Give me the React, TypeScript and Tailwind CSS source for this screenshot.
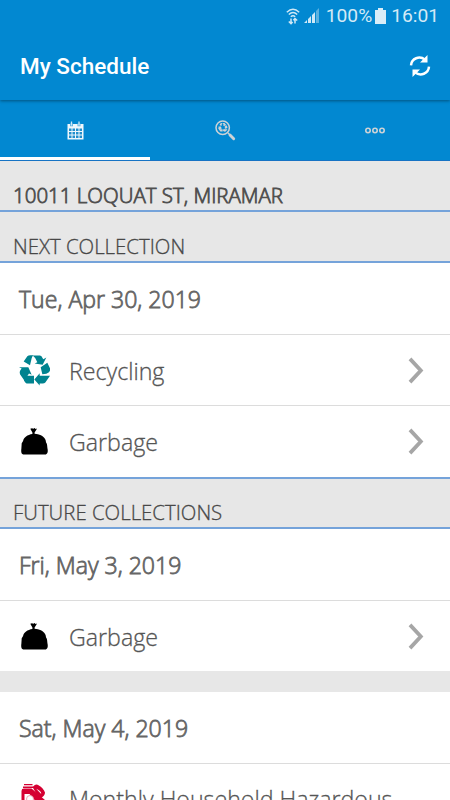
import { clsx } from 'clsx';
import type { ReactNode } from 'react';

function WifiIcon() {
  return (
    <svg viewBox="0 0 14 17" className="h-[17px] w-[14px]" fill="none" stroke="#cfe8f6" strokeWidth="1.4">
      <path d="M.8 4.2Q7-1.8 13.200 4.200M2.800 6.500Q7 2.400 11.200 6.500M4.800 8.700Q7 6.600 9.200 8.700" />
      <path d="M5 10.500v5M9 10.500v5M2.800 13.500 5 15.600l1.600-1.700M7.400 12.300 9 10.600l2.200 1.900" strokeWidth="1.500" />
    </svg>
  );
}

function SignalIcon() {
  return (
    <svg viewBox="0 0 16 16" className="h-4 w-4">
      <path d="M0 15h3v-3zM4 15h3V8L4 11zM8 15h3V4L8 7z" fill="#cfe8f6" />
      <path d="M12 15h3V0l-3 3z" fill="#5cb1df" />
    </svg>
  );
}

function BatteryIcon() {
  return (
    <svg viewBox="0 0 11 16" className="h-4 w-[11px]" fill="#d9edf8">
      <path d="M3 0h5v2h3v14H0V2h3z" />
    </svg>
  );
}

function RefreshIcon() {
  return (
    <svg viewBox="0 0 22 22" className="h-[22px] w-[22px]">
      <path d="M2 10.300C2.500 3.500 10.500.2 16 4.700M20 11.700C19.500 18.500 11.500 21.800 6 17.300" fill="none" stroke="#fff" strokeWidth="2.500" />
      <path d="M18.500 0v7.500H11zM3.500 22v-7.500H11z" fill="#fff" />
    </svg>
  );
}

function CalendarIcon() {
  return (
    <svg viewBox="0 0 17 19" className="h-[19px] w-[17px]">
      <path d="M.5 3h16v15.500H.5z" fill="#eef7fc" />
      <path d="M2 7.500h2.500V10H2zM5.500 7.500H8V10H5.500zM9 7.500h2.500V10H9zM12.500 7.500H15V10h-2.500zM2 11h2.500v2.500H2zM5.500 11H8v2.500H5.500zM9 11h2.500v2.500H9zM12.500 11H15v2.500h-2.500zM2 14.500h2.500V17H2zM5.500 14.500H8V17H5.500zM9 14.500h2.500V17H9zM12.500 14.500H15V17h-2.500z" fill="#218fcd" />
      <path d="M4.500 2.500v2.800M12 2.500v2.800" stroke="#5cb1df" strokeWidth="3" />
      <path d="M4.500.5v4M12 .5v4" stroke="#cfe8f6" strokeWidth="1.300" />
    </svg>
  );
}

function RecyclePaths() {
  return (
    <>
      <path d="M14 19 25 3q3-3 9-3h9q-4 5-5 9L33 30z" />
      <path d="M41 1h22q5 1 8 8l2 3 9-5-11 22-24-4 8-4q-4-13-14-20z" />
      <path d="m65 36 20-13 8 16q2 7-3 12-6 6-20 6z" />
      <path d="M62 91 46 73l16-19v8h31L79 82q-3 3-8 3h-9z" />
      <path d="M0 36h28l10 23-8-4-14 21L3 57q-3-6 1-12l4-5z" />
      <path d="M20 62h25v23H26q-7 0-11-10z" />
    </>
  );
}

function RecycleIcon() {
  return (
    <svg viewBox="0 0 93 92" className="h-[31px] w-[31px]" fill="#00838f">
      <RecyclePaths />
    </svg>
  );
}

function SearchIcon() {
  return (
    <svg viewBox="0 0 21 21" className="h-[21px] w-[21px]">
      <circle cx="7.700" cy="7.700" r="6.700" fill="none" stroke="#cdd2d6" strokeWidth="1.500" />
      <path d="m12.800 12.800 2 2" stroke="#cdd2d6" strokeWidth="1.300" />
      <path d="m15 15 3.700 3.700" stroke="#cdd2d6" strokeWidth="2.900" strokeLinecap="round" />
      <g transform="translate(3.100 3) scale(.1)" fill="#cdd2d6">
        <RecyclePaths />
      </g>
    </svg>
  );
}

function MoreIcon() {
  return (
    <svg viewBox="0 0 20 7" className="h-[7px] w-5" fill="none" stroke="#cdd2d6" strokeWidth="1.600">
      <circle cx="3" cy="3.500" r="2.200" />
      <circle cx="10" cy="3.500" r="2.200" />
      <circle cx="17" cy="3.500" r="2.200" />
    </svg>
  );
}

function GarbageIcon() {
  return (
    <svg viewBox="0 0 27 27" className="h-[27px] w-[27px]">
      <path d="M9.300.8 11 .3l1.300.5L13.600 0l1 .9 1.500-.4-2.500 4.100v1.100c4.500.3 8.800 2 10.600 5.500.8 1.500.6 2.300.9 3.200 1.300 1.800 1 3.500 1.300 5.500.6 2.600.7 5.300-1.500 6.500H2.300C-.2 26.200.1 22.500.4 20.300l.3-5.100 1.400-2.100c.5-3.600 4.400-6.400 9.300-7.100V4.600z" />
    </svg>
  );
}

function HazardIcon() {
  return (
    <svg viewBox="0 0 27 30" className="h-[30px] w-[27px]">
      <path d="M3 0h8.500v1.300H3zM2 2.400h10v1.600H2z" fill="#d50032" />
      <path d="M.5 30V7Q.5 4.600 3 4.600h7.500L24 16v14h-6v-9L8.500 10H3.500v20z" fill="#d50032" />
      <path d="m11.500 3 2-1.800q2-1.500 4 0 5 3 6.500 7.300 0 3-4 5.500L16 11z" fill="#d50032" />
      <path d="m15.200 4.800 5 5.200q.3-2.800-5-5.200z" fill="#fff" />
      <circle cx="9" cy="15" r="3.500" fill="#fff" stroke="#e88ba3" strokeWidth=".8" />
    </svg>
  );
}

function ChevronIcon() {
  return (
    <svg viewBox="0 0 16 27" className="h-[27px] w-4 shrink-0" fill="none" stroke="#a6a6a6" strokeWidth="3.800">
      <path d="m2 1.900 10.800 11.600L2 25.100" />
    </svg>
  );
}

const icons: Record<string, ReactNode> = {
  recycling: <RecycleIcon />,
  garbage: <GarbageIcon />,
  hazard: <HazardIcon />,
};

const tabs = [
  { id: 'calendar', icon: <CalendarIcon />, active: true },
  { id: 'search', icon: <SearchIcon />, active: false },
  { id: 'more', icon: <MoreIcon />, active: false },
];

function SectionTitle({ children, className }: { children: ReactNode; className?: string }) {
  return (
    <h2 className={clsx('flex items-end border-b-2 border-[#75a3da] bg-[#e7e7e7] pl-[13px] leading-[27px] font-light text-[#484848]', className)}>
      {children}
    </h2>
  );
}

function DateRow({ children }: { children: ReactNode }) {
  return (
    <div className="flex h-[72px] items-center border-b border-[#dcdcdc] pt-0.5 pl-[19px] text-[23.1px] font-light text-[#666] [-webkit-text-stroke:0.8px_#666]">
      {children}
    </div>
  );
}

function ItemRow({ icon, label, className }: { icon: string; label: string; className?: string }) {
  return (
    <div className={clsx('flex pr-[26px] pl-[15px] text-[23.2px] leading-8 text-[#555]', className)}>
      <div className="mr-[15px] flex w-[39px] shrink-0 justify-center">{icons[icon]}</div>
      <span className="grow font-light whitespace-nowrap [-webkit-text-stroke:0.3px_#555]">{label}</span>
      <ChevronIcon />
    </div>
  );
}

export default function App() {
  return (
    <div className="h-[800px] w-[450px] overflow-hidden bg-white font-['Open_Sans','Noto_Sans',sans-serif]">
      <header className="relative h-[100px] bg-[#0288d1] font-[Roboto,sans-serif] shadow-[0_1px_3px_rgba(0,0,0,0.4)]">
        <div className="flex h-8 items-center justify-end pr-[11px] text-[19.2px] text-[#d4eaf6]">
          <WifiIcon />
          <span className="mr-[6px] ml-[4px]"><SignalIcon /></span>
          <span>100%</span>
          <span className="mr-[5px] ml-[3px]"><BatteryIcon /></span>
          <span>16:01</span>
        </div>
        <div className="flex h-[68px] items-center justify-between pr-[19px] pl-5">
          <h1 className="pt-px text-[22.5px] font-medium text-white">My Schedule</h1>
          <RefreshIcon />
        </div>
      </header>

      <nav className="grid h-[61px] grid-cols-3 border-b border-[#1673c4] bg-[#0288d1]">
        {tabs.map((tab) => (
          <div
            key={tab.id}
            className={clsx('flex items-center justify-center border-b-[3px] pt-[3px]', tab.active ? 'border-white' : 'border-transparent')}
          >
            {tab.icon}
          </div>
        ))}
      </nav>

      <main>
        <SectionTitle className="h-[51px] pb-px text-[20.5px] [-webkit-text-stroke:0.8px_#505050]">10011 LOQUAT ST, MIRAMAR</SectionTitle>
        <SectionTitle className="h-[51px] pb-px text-[20.4px] [-webkit-text-stroke:0.3px_#484848]">NEXT COLLECTION</SectionTitle>
        <DateRow>Tue, Apr 30, 2019</DateRow>
        <ItemRow icon="recycling" label="Recycling" className="h-[71px] items-center border-b border-[#dcdcdc] pt-px" />
        <ItemRow icon="garbage" label="Garbage" className="h-[71px] items-center" />

        <SectionTitle className="h-[52px] border-t-2 pb-px text-[20.4px] [-webkit-text-stroke:0.3px_#484848]">FUTURE COLLECTIONS</SectionTitle>
        <DateRow>Fri, May 3, 2019</DateRow>
        <ItemRow icon="garbage" label="Garbage" className="h-[70px] items-center pt-px" />

        <div className="h-[21px] bg-[#e7e7e7]" />
        <DateRow>Sat, May 4, 2019</DateRow>
        {/* taller row, its chevron sits below the fold */}
        <ItemRow icon="hazard" label="Monthly Household Hazardous" className="h-[102px] items-start pt-5 [&>span]:-mt-px [&>svg]:mt-5" />
      </main>
    </div>
  );
}
